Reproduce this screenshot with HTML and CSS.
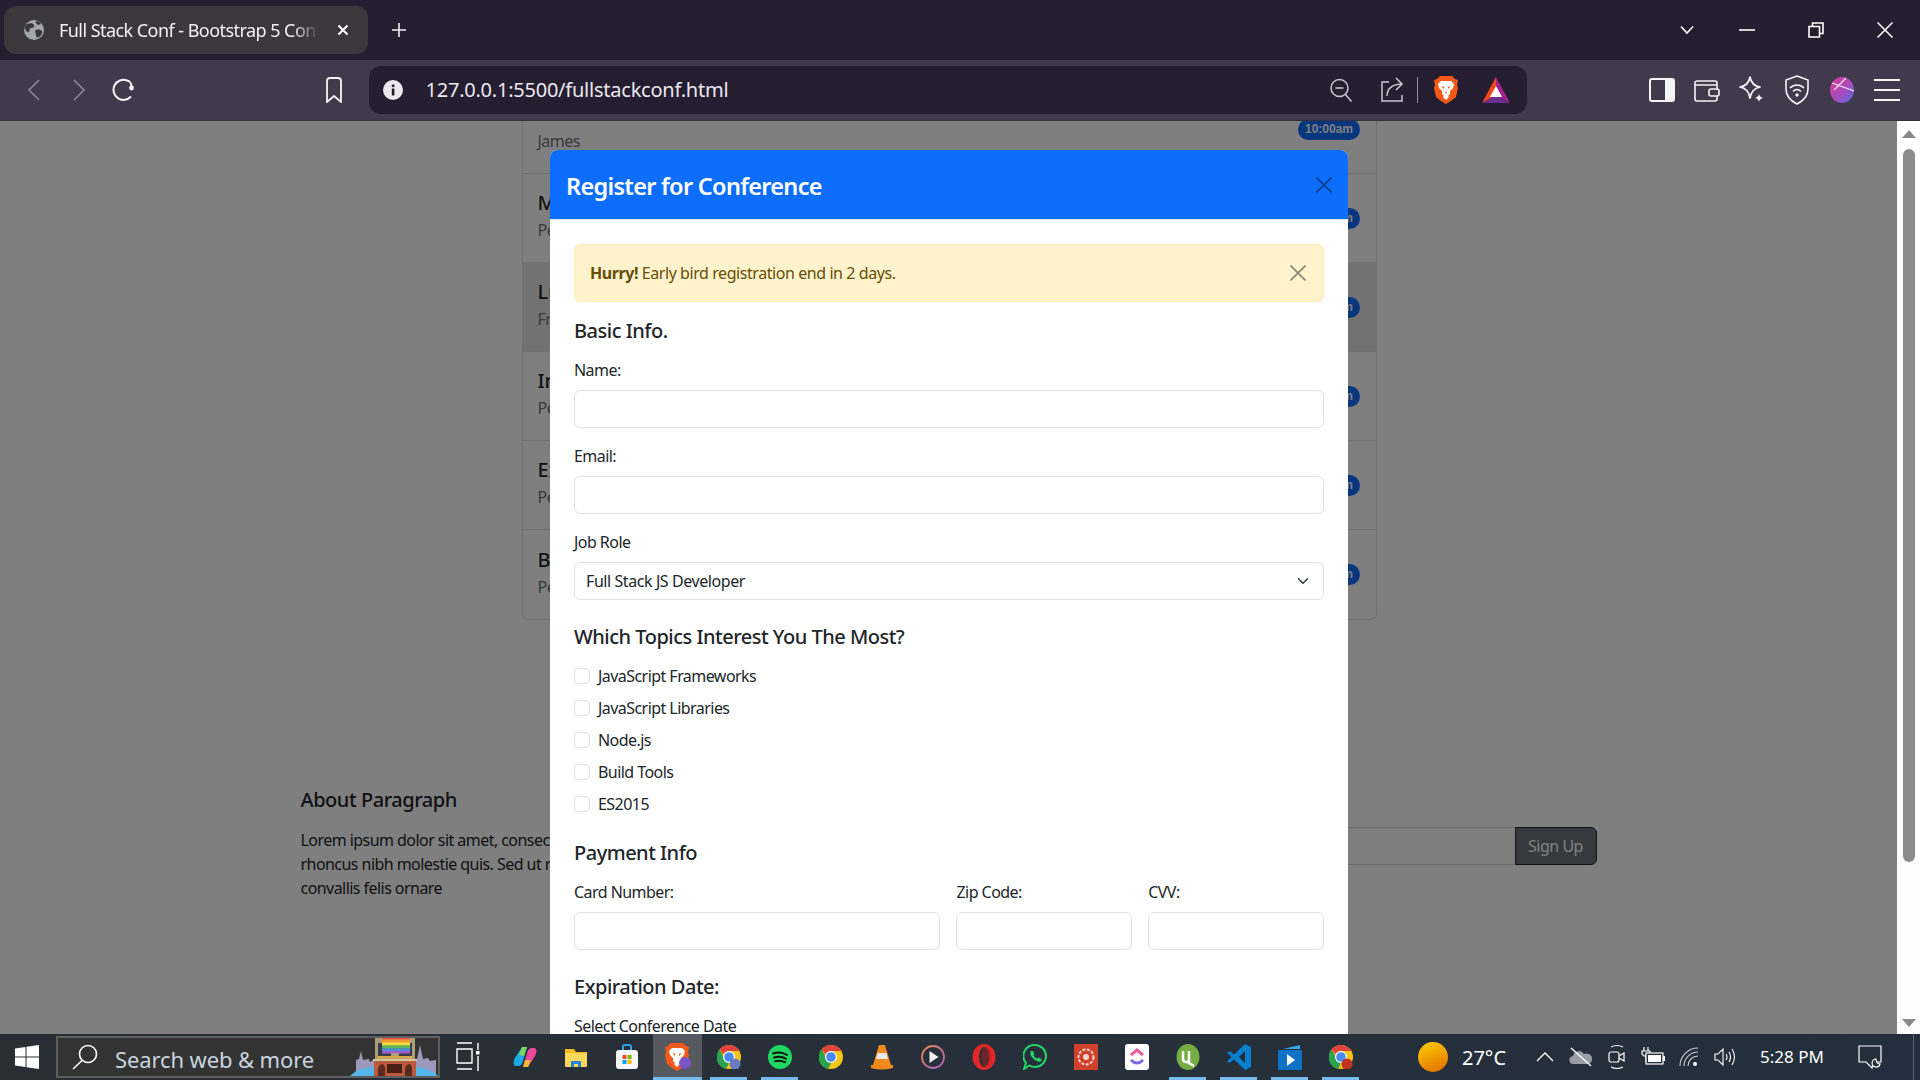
FILE: index.html
```html
<!DOCTYPE html>
<html lang="en">
<head>
<meta charset="utf-8">
<title>Full Stack Conf - Bootstrap 5 Conference</title>
<link rel="stylesheet" href="styles.css">
</head>
<body>
<div class="tabstrip">
  <div class="tab">
    <svg class="favicon" width="20" height="20" viewBox="0 0 20 20"><circle cx="10" cy="10" r="10" fill="#a3a6ab"/><path d="M3 4c3-1 6-1 7 1s-1 3-3 3-1 3-2 4-3-1-4-3 0-4 2-5zM12 10c2-1 5 0 6 1s-1 5-3 6-3 0-3-2-2-4 0-5zM12 1c2 0 4 1 5 3l-3 1c-1-1-3-2-2-4z" fill="#3b383c"/></svg>
    <span class="tab-title">Full Stack Conf - Bootstrap 5 Conference</span>
    <svg class="tab-x" width="12" height="12" viewBox="0 0 12 12"><path d="M1.500 1.500l9 9M10.500 1.500l-9 9" stroke="#fff" stroke-width="2"/></svg>
  </div>
  <svg class="plus" width="16" height="16" viewBox="0 0 16 16"><path d="M8 1v14M1 8h14" stroke="#f2f2f2" stroke-width="1.600"/></svg>
  <div class="winctl">
    <div class="winbtn chev"><svg width="14" height="10" viewBox="0 0 14 10"><path d="M1 1.500l6 6.500 6-6.500" fill="none" stroke="#fff" stroke-width="1.600"/></svg></div>
    <div class="winbtn"><svg width="16" height="2" viewBox="0 0 16 2"><path d="M0 1h16" stroke="#fff" stroke-width="1.600"/></svg></div>
    <div class="winbtn"><svg width="16" height="16" viewBox="0 0 16 16"><path d="M1 4.500h10.500v10.500H1zM4.500 4.500V1H15v10.500h-3.500" fill="none" stroke="#fff" stroke-width="1.600"/></svg></div>
    <div class="winbtn"><svg width="16" height="16" viewBox="0 0 16 16"><path d="M.5.500l15 15M15.500.500l-15 15" stroke="#fff" stroke-width="1.500"/></svg></div>
  </div>
</div>

<div class="toolbar">
  <div class="tbtn"><svg width="14" height="24" viewBox="0 0 14 24"><path d="M12 2L2 12l10 10" fill="none" stroke="#8b8794" stroke-width="1.600"/></svg></div>
  <div class="tbtn"><svg width="14" height="24" viewBox="0 0 14 24"><path d="M2 2l10 10L2 22" fill="none" stroke="#8b8794" stroke-width="1.600"/></svg></div>
  <div class="tbtn"><svg width="24" height="24" viewBox="0 0 24 24"><path d="M19 18.500A10 10 0 1 1 15 2.500" fill="none" stroke="#f4f4f6" stroke-width="2"/><path d="M15 2.500c2.500.5 4.500 3 4.500 6" fill="none" stroke="#f4f4f6" stroke-width="2"/><circle cx="19.500" cy="10" r="2.400" fill="#f4f4f6"/></svg></div>
  <div class="tbtn bookmark"><svg width="18" height="26" viewBox="0 0 18 26"><path d="M2 4q0-3 3-3h8q3 0 3 3v21l-7-6-7 6z" fill="none" stroke="#f4f4f6" stroke-width="1.800"/></svg></div>
  <div class="urlbar">
    <svg class="info" width="20" height="20" viewBox="0 0 20 20"><circle cx="10" cy="10" r="10" fill="#ebe8ef"/><rect x="8.800" y="8.500" width="2.600" height="7" fill="#251d30"/><rect x="8.800" y="4.500" width="2.600" height="2.600" fill="#251d30"/></svg>
    <span class="url">127.0.0.1:5500/fullstackconf.html</span>
    <div class="url-icons">
      <svg class="ui-zoom" width="24" height="26" viewBox="0 0 24 26"><circle cx="10.500" cy="11" r="8.500" fill="none" stroke="#c9c6ce" stroke-width="1.500"/><path d="M6.500 11h8M16.500 17.500l6 7" stroke="#c9c6ce" stroke-width="1.500"/></svg>
      <svg class="ui-share" width="24" height="26" viewBox="0 0 24 26"><path d="M9 5H2v19h20v-6" fill="none" stroke="#c9c6ce" stroke-width="1.500"/><path d="M7 19c0-7 5-12 15-12M16 1l6 6-6 6" fill="none" stroke="#c9c6ce" stroke-width="1.500"/></svg>
      <span class="ui-sep"></span>
      <svg class="ui-brave" width="24" height="28" viewBox="0 0 24 28"><path d="M6 0h12l3 3 3 1-1 5 1 3-2 9-5 4-5 3-5-3-5-4-2-9 1-3-1-5 3-1z" fill="#f5591a"/><path d="M7 5h10l3 3-1 4-3 3v3l-2 2 1 1-3 3-3-3 1-1-2-2v-3l-3-3-1-4z" fill="#fff"/><path d="M7.500 10l3 1-1 2zM16.500 10l-3 1 1 2zM11 16h2l-1 2z" fill="#f5591a"/></svg>
      <svg class="ui-bat" width="28" height="28" viewBox="0 0 28 28"><path d="M14 1L0 27l14-8z" fill="#f0471f"/><path d="M14 1l14 26-14-8z" fill="#a3238e"/><path d="M0 27h28l-14-8z" fill="#6c2f91"/><path d="M14 10l6 11H8z" fill="#fff"/></svg>
    </div>
  </div>
  <div class="tools">
    <div class="tool"><svg width="26" height="24" viewBox="0 0 26 24"><rect x="1" y="1" width="24" height="22" rx="2" fill="none" stroke="#f4f4f6" stroke-width="2"/><rect x="16" y="1" width="9" height="22" fill="#f4f4f6"/></svg></div>
    <div class="tool"><svg width="26" height="24" viewBox="0 0 26 24"><path d="M3 3h18a2 2 0 0 1 2 2v16a2 2 0 0 1-2 2H3a2 2 0 0 1-2-2V4a3 3 0 0 1 2-1zM1 7h22" fill="none" stroke="#f4f4f6" stroke-width="1.600"/><rect x="15" y="11" width="10" height="7" rx="2" fill="#413a4d" stroke="#f4f4f6" stroke-width="1.600"/></svg></div>
    <div class="tool"><svg width="26" height="28" viewBox="0 0 26 28"><path d="M11 1c1 6 4 9 10 10-5 1-9 5-10 11-1-6-4-10-10-11 6-1 9-4 10-10z" fill="none" stroke="#f4f4f6" stroke-width="1.700" stroke-linejoin="round"/><path d="M20 18c.4 2 1.600 3.200 4 4-2.400.5-3.600 2-4 4-.4-2-1.600-3.500-4-4 2.400-.8 3.600-2 4-4z" fill="#f4f4f6"/></svg></div>
    <div class="tool"><svg width="24" height="30" viewBox="0 0 24 30"><path d="M12 1l11 4v9c0 7-5 12-11 15C6 26 1 21 1 14V5z" fill="none" stroke="#f4f4f6" stroke-width="1.600"/><path d="M5 13c4-4 10-4 14 0M8 16.500c2.500-2.500 5.500-2.500 8 0" fill="none" stroke="#f4f4f6" stroke-width="1.600"/><circle cx="12" cy="20" r="1.700" fill="#f4f4f6"/></svg></div>
    <div class="tool"><svg width="24" height="26" viewBox="0 0 24 26"><defs><linearGradient id="av" x1="0" y1="0" x2="1" y2="1"><stop offset="0" stop-color="#dd3a8e"/><stop offset=".55" stop-color="#a84cc0"/><stop offset="1" stop-color="#4f6ae0"/></linearGradient></defs><ellipse cx="12" cy="13" rx="12" ry="13" fill="url(#av)"/><path d="M2 6l22 8M16 1L4 13" stroke="#f3dff0" stroke-width="1.200"/></svg></div>
    <div class="tool"><svg width="26" height="24" viewBox="0 0 26 24"><path d="M0 2h26M0 12h26M0 22h26" stroke="#f4f4f6" stroke-width="2"/></svg></div>
  </div>
</div>

<div class="viewport">
  <main class="page">
    <div class="container">
      <ul class="sessions">
        <li class="session">
          <div><h5>Node Basics</h5><p>James</p></div><span class="pill">10:00am</span>
        </li>
        <li class="session">
          <div><h5>Microservices</h5><p>Peter Smith</p></div><span class="pill">11:00am</span>
        </li>
        <li class="session current">
          <div><h5>Lunch</h5><p>Free time</p></div><span class="pill">12:00pm</span>
        </li>
        <li class="session">
          <div><h5>Intro to React</h5><p>Peter Jones</p></div><span class="pill">1:00pm</span>
        </li>
        <li class="session">
          <div><h5>Express Routing</h5><p>Peter Brown</p></div><span class="pill">2:00pm</span>
        </li>
        <li class="session">
          <div><h5>Bootstrap 5</h5><p>Peter Parker</p></div><span class="pill">3:00pm</span>
        </li>
      </ul>
      <footer class="foot">
        <section class="about">
          <h5>About Paragraph</h5>
          <p>Lorem ipsum dolor sit amet, consectetur adipiscing elit. Nunc<br>rhoncus nibh molestie quis. Sed ut rutrum nisi, vel aliquet<br>convallis felis ornare</p>
        </section>
        <form class="signup">
          <input class="signup-input" type="text" aria-label="Email">
          <button class="signup-btn" type="button">Sign Up</button>
        </form>
      </footer>
    </div>
    <div class="backdrop"></div>
    <div class="modal">
      <header class="modal-head">
        <h4>Register for Conference</h4>
        <svg class="modal-x" width="16" height="16" viewBox="0 0 16 16"><path d="M.5.500l15 15M15.500.500l-15 15" stroke="#0a3d85" stroke-width="1.600"/></svg>
      </header>
      <div class="modal-body">
        <div class="alert"><span><strong>Hurry!</strong> Early bird registration end in 2 days.</span>
          <svg width="16" height="16" viewBox="0 0 16 16"><path d="M.5.500l15 15M15.500.500l-15 15" stroke="#8a8371" stroke-width="1.600"/></svg>
        </div>
        <h5 class="sec">Basic Info.</h5>
        <div class="field"><label>Name:</label><input type="text"></div>
        <div class="field"><label>Email:</label><input type="text"></div>
        <div class="field"><label>Job Role</label>
          <select><option>Full Stack JS Developer</option></select>
        </div>
        <h5 class="sec">Which Topics Interest You The Most?</h5>
        <div class="checks">
          <label class="check"><input type="checkbox">JavaScript Frameworks</label>
          <label class="check"><input type="checkbox">JavaScript Libraries</label>
          <label class="check"><input type="checkbox">Node.js</label>
          <label class="check"><input type="checkbox">Build Tools</label>
          <label class="check"><input type="checkbox">ES2015</label>
        </div>
        <h5 class="sec">Payment Info</h5>
        <div class="pay">
          <div class="field"><label>Card Number:</label><input type="text"></div>
          <div class="field"><label>Zip Code:</label><input type="text"></div>
          <div class="field"><label>CVV:</label><input type="text"></div>
        </div>
        <h5 class="sec">Expiration Date:</h5>
        <div class="field"><label>Select Conference Date</label><input type="text"></div>
      </div>
    </div>
  </main>
  <aside class="scrollbar">
    <span class="arrow up"></span>
    <span class="thumb"></span>
    <span class="arrow down"></span>
  </aside>
</div>

<div class="taskbar">
  <div class="start"><svg width="24" height="24" viewBox="0 0 24 24"><path d="M0 3.500l10.500-1.500v9.500H0zM11.500 1.800L24 0v11.500H11.500zM0 12.500h10.500V22L0 20.500zM11.500 12.500H24V24l-12.500-1.800z" fill="#fff"/></svg></div>
  <div class="search">
    <svg class="search-ico" width="26" height="26" viewBox="0 0 26 26"><circle cx="16" cy="10" r="8.500" fill="none" stroke="#fff" stroke-width="1.600"/><path d="M10 16.500L1 25" stroke="#fff" stroke-width="1.600"/></svg>
    <span class="search-text">Search web &amp; more</span>
    <svg class="search-art" width="88" height="42" viewBox="0 0 88 42">
      <path d="M6 42V26l3-1 2-8 2 9 6-1 1 3 5-3v17zM64 42V28l3-3 3-14 3 14 5-1 2 3 6-1v16z" fill="#9c98ba"/>
      <path d="M0 42q8-9 26-9h36q18 0 26 9z" fill="#54b6ea"/>
      <rect x="23" y="0" width="44" height="2.500" fill="#d4c6a0"/>
      <rect x="25" y="2" width="40" height="24" fill="#ab9c7a"/>
      <rect x="28" y="9" width="34" height="15" fill="#3a3c48"/>
      <rect x="32" y="2.500" width="28" height="3.200" fill="#ef4b4b"/><rect x="32" y="5.500" width="28" height="3.200" fill="#f39a2e"/><rect x="32" y="8.500" width="28" height="3.200" fill="#f7dc3c"/><rect x="32" y="11.500" width="28" height="3.200" fill="#5cb85c"/><rect x="32" y="14.500" width="28" height="3" fill="#4a8fe0"/><rect x="32" y="17" width="28" height="2.500" fill="#a35bc9"/>
      <rect x="41" y="19" width="8" height="5" fill="#ab9c7a"/>
      <rect x="27" y="22" width="36" height="2.500" fill="#d8a94c"/>
      <rect x="23" y="25" width="44" height="2" fill="#d4c6a0"/>
      <rect x="24" y="27" width="42" height="15" fill="#bb5a3c"/>
      <path d="M28 42v-8q2-4 4-4t3 4v8zM55 42v-8q2-4 4-4t3 4v8z" fill="#5a2a1e"/><rect x="37" y="30" width="15" height="9" fill="#4a1f18"/>
    </svg>
  </div>
  <div class="apps">
    <div class="app taskview"><svg width="24" height="30" viewBox="0 0 24 30"><path d="M1 1h15M1 7h15v14H1zM1 27h15M22 1v7M22 14v15" fill="none" stroke="#fff" stroke-width="1.400"/><rect x="20" y="9" width="3.500" height="3.500" fill="#fff"/></svg></div>
    <div class="app copilot"><svg width="24" height="24" viewBox="0 0 24 24"><path d="M9 2h5l-4 14c-1 3-2 5-5 5H3C0 21 0 17 2 13z" fill="#1aa9e6"/><path d="M9 2h5l-3 9-5-1z" fill="#7dd657"/><path d="M15 22h-5l4-14c1-3 2-5 5-5h2c3 0 3 4 1 8z" fill="#e8479a"/><path d="M15 22h-5l2-7h6z" fill="#f7b733"/></svg></div>
    <div class="app"><svg width="24" height="24" viewBox="0 0 24 24"><path d="M1 4h9l2 3h11v3H1z" fill="#f5b921"/><rect x="1" y="8" width="22" height="14" rx="1" fill="#fbd75b"/><path d="M7 22v-6h10v6h-3v-3h-4v3z" fill="#2a80d8"/></svg></div>
    <div class="app"><svg width="24" height="26" viewBox="0 0 24 26"><path d="M8 7V3a2 2 0 0 1 2-2h4a2 2 0 0 1 2 2v4" fill="none" stroke="#2ba5e8" stroke-width="2"/><rect x="1" y="6" width="22" height="19" rx="3" fill="#f5f5f5"/><rect x="7.500" y="11" width="4" height="4" fill="#f25022"/><rect x="12.500" y="11" width="4" height="4" fill="#7fba00"/><rect x="7.500" y="16" width="4" height="4" fill="#00a4ef"/><rect x="12.500" y="16" width="4" height="4" fill="#ffb900"/></svg></div>
    <div class="app active"><svg width="26" height="28" viewBox="0 0 26 28"><path d="M6 0h12l3 3 3 1-1 5 1 3-2 9-5 4-5 3-5-3-5-4-2-9 1-3-1-5 3-1z" fill="#f5591a"/><path d="M7 5h10l3 3-1 4-3 3v3l-2 2 1 1-3 3-3-3 1-1-2-2v-3l-3-3-1-4z" fill="#fff"/><path d="M7.500 10l3 1-1 2zM16.500 10l-3 1 1 2z" fill="#f5591a"/><circle cx="20" cy="20" r="6" fill="#7a54c9"/></svg></div>
    <div class="app open"><svg class="chrome" width="24" height="24" viewBox="0 0 24 24"><circle cx="12" cy="12" r="12" fill="#f5c518"/><path d="M12 0a12 12 0 0 1 10.400 6H12a6 6 0 0 0-5.600 3.600L2.500 4.500A12 12 0 0 1 12 0z" fill="#e2443a"/><path d="M2.500 4.500l4.500 8 5 5.500-3 6A12 12 0 0 1 2.500 4.500z" fill="#2ba24c"/><circle cx="12" cy="12" r="6" fill="#fff"/><circle cx="12" cy="12" r="4.800" fill="#4a8af4"/><circle cx="18" cy="19" r="5.500" fill="#6a7bc4"/></svg></div>
    <div class="app open"><svg width="24" height="24" viewBox="0 0 24 24"><circle cx="12" cy="12" r="12" fill="#1ed760"/><path d="M5 8.500c5-1.500 10-1 14 1.500M6 12.500c4-1 8.500-.8 12 1.300M7 16.200c3.500-.8 7-.5 10 1" fill="none" stroke="#111" stroke-width="2" stroke-linecap="round"/></svg></div>
    <div class="app"><svg width="24" height="24" viewBox="0 0 24 24"><circle cx="12" cy="12" r="12" fill="#f5c518"/><path d="M12 0a12 12 0 0 1 10.400 6H12a6 6 0 0 0-5.600 3.600L2.500 4.500A12 12 0 0 1 12 0z" fill="#e2443a"/><path d="M2.500 4.500l4.500 8 5 5.500-3 6A12 12 0 0 1 2.500 4.500z" fill="#2ba24c"/><circle cx="12" cy="12" r="6" fill="#fff"/><circle cx="12" cy="12" r="4.800" fill="#4a8af4"/></svg></div>
    <div class="app"><svg width="22" height="26" viewBox="0 0 22 26"><path d="M8 1h6l6 20H2z" fill="#f08a1c"/><path d="M6.500 9h9l1.500 6H5z" fill="#e8e8e8"/><path d="M0 21h22v3q-11 3-22 0z" fill="#f08a1c"/></svg></div>
    <div class="app"><svg width="24" height="24" viewBox="0 0 24 24"><defs><linearGradient id="pg" x1="0" y1="0" x2="1" y2="1"><stop offset="0" stop-color="#e88a4a"/><stop offset="1" stop-color="#a55fc5"/></linearGradient></defs><circle cx="12" cy="12" r="11" fill="none" stroke="url(#pg)" stroke-width="1.800"/><path d="M8.500 6v12l9-6z" fill="#eee"/></svg></div>
    <div class="app"><svg width="24" height="26" viewBox="0 0 24 26"><ellipse cx="12" cy="13" rx="11.500" ry="13" fill="#e02828"/><ellipse cx="12" cy="13" rx="5" ry="10" fill="#2a303a"/><ellipse cx="14" cy="13" rx="5" ry="10" fill="#a51a1a" opacity=".5"/></svg></div>
    <div class="app"><svg width="24" height="26" viewBox="0 0 24 26"><path d="M12 1a11 11 0 0 1 0 22c-2 0-4-.5-5.500-1.500L1 25l2-6A11 11 0 0 1 12 1z" fill="none" stroke="#25d366" stroke-width="2"/><path d="M8 7l2 0 1.500 3-1 1.500c1 1.500 2 2.500 3.500 3l1.500-1 3 1.500v2c-1 1-3 1-5 0s-5-3.500-6-6c-.5-2 0-3.500.5-4z" fill="#25d366"/></svg></div>
    <div class="app"><svg width="24" height="26" viewBox="0 0 24 26"><rect width="24" height="26" fill="#d0402a"/><circle cx="12" cy="13" r="7.500" fill="none" stroke="#f3d7d0" stroke-width="2" stroke-dasharray="3 1.500"/><circle cx="12" cy="13" r="3" fill="#f3d7d0"/></svg></div>
    <div class="app"><svg width="24" height="26" viewBox="0 0 24 26"><rect width="24" height="26" rx="3" fill="#fff"/><path d="M6 11l6-5 6 5" fill="none" stroke="#ee5e99" stroke-width="3"/><path d="M6 16c4 4 8 4 12 0" fill="none" stroke="#7b68ee" stroke-width="3"/></svg></div>
    <div class="app open"><svg width="24" height="26" viewBox="0 0 24 26"><ellipse cx="12" cy="13" rx="11.500" ry="13" fill="#76ad43"/><path d="M7 7v8c0 3 4 4 6 2M13 7v12l5 3" fill="none" stroke="#fff" stroke-width="2.500"/></svg></div>
    <div class="app open"><svg width="24" height="26" viewBox="0 0 24 26"><path d="M18 0l6 3v20l-6 3L7 15.500 2.500 19 0 17.500 4.500 13 0 8.500 2.500 7 7 10.500z" fill="#0a7fd0"/><path d="M18 7l-6 6 6 6z" fill="#232b33"/></svg></div>
    <div class="app open"><svg width="24" height="26" viewBox="0 0 24 26"><path d="M5 5l17-4v4z" fill="#35a7e6"/><rect y="6" width="24" height="20" fill="#0f72c6"/><path d="M9 10v12l8-6z" fill="#fff"/></svg></div>
    <div class="app open"><svg width="24" height="24" viewBox="0 0 24 24"><circle cx="12" cy="12" r="12" fill="#f5c518"/><path d="M12 0a12 12 0 0 1 10.400 6H12a6 6 0 0 0-5.600 3.600L2.500 4.500A12 12 0 0 1 12 0z" fill="#e2443a"/><path d="M2.500 4.500l4.500 8 5 5.500-3 6A12 12 0 0 1 2.500 4.500z" fill="#2ba24c"/><circle cx="12" cy="12" r="6" fill="#fff"/><circle cx="12" cy="12" r="4.800" fill="#4a8af4"/><circle cx="18" cy="19" r="5.500" fill="#c0341f"/></svg></div>
  </div>
  <div class="tray">
    <div class="sun-wrap"><span class="sun"></span></div>
    <span class="temp">27°C</span>
    <div class="tr"><svg width="18" height="10" viewBox="0 0 18 10"><path d="M1 9l8-8 8 8" fill="none" stroke="#fff" stroke-width="1.300"/></svg></div>
    <div class="tr"><svg width="24" height="20" viewBox="0 0 24 20"><path d="M5 17a4 4 0 0 1-1-8 6 6 0 0 1 11-2 5 5 0 0 1 5 10z" fill="#9a9fa6"/><path d="M2 1l20 18" stroke="#fff" stroke-width="1.300"/></svg></div>
    <div class="tr"><svg width="18" height="26" viewBox="0 0 18 26"><rect x="1" y="8" width="10" height="10" rx="2" fill="none" stroke="#fff" stroke-width="1.200"/><path d="M11 12l5-3v8l-5-3" fill="none" stroke="#fff" stroke-width="1.200"/><path d="M3 3q6-3 12 0M3 23q6 3 12 0" fill="none" stroke="#fff" stroke-width="1.100"/></svg></div>
    <div class="tr"><svg width="24" height="22" viewBox="0 0 24 22"><path d="M3 1v4M7 1v4M1 5h8v3l-2 2H3L1 8zM5 10v6" fill="none" stroke="#fff" stroke-width="1.200"/><rect x="5" y="7" width="17" height="11" fill="#25303b" stroke="#fff" stroke-width="1.200"/><rect x="7" y="9" width="13" height="7" fill="#fff"/><rect x="22" y="10" width="2" height="5" fill="#fff"/></svg></div>
    <div class="tr"><svg width="20" height="20" viewBox="0 0 20 20"><path d="M1 19A18 18 0 0 1 19 1M5 19A14 14 0 0 1 19 5M9 19A10 10 0 0 1 19 9" fill="none" stroke="#c9ced4" stroke-width="1.100"/><circle cx="16" cy="17" r="2" fill="#fff"/></svg></div>
    <div class="tr"><svg width="22" height="20" viewBox="0 0 22 20"><path d="M1 7h3l5-5v16l-5-5H1z" fill="none" stroke="#fff" stroke-width="1.100"/><path d="M12 7q2 3 0 6M15 5q3 5 0 10M18 2q5 8 0 16" fill="none" stroke="#fff" stroke-width="1.100"/></svg></div>
    <span class="clock">5:28 PM</span>
    <div class="notif"><svg width="24" height="24" viewBox="0 0 24 24"><path d="M1 1h22v16l-5 0-3 2-1 4-6-6H1z" fill="none" stroke="#fff" stroke-width="1.200"/><path d="M18 14a4 4 0 1 0 4 5 5 5 0 0 1-4-5z" fill="#25303b" stroke="#fff" stroke-width="1.200"/></svg></div>
    <span class="desk-edge"></span>
  </div>
</div>
</body>
</html>
```

FILE: styles.css
```css
* { box-sizing: border-box; }
html, body { margin: 0; height: 100%; }
body {
  display: flex;
  flex-direction: column;
  height: 100vh;
  overflow: hidden;
  font-family: "Noto Sans", "Open Sans", sans-serif;
  font-size: 16px;
  line-height: 24px;
  color: #212529;
  background: #fff;
}
h4, h5, p, ul { margin: 0; padding: 0; }

/* browser tab strip */
.tabstrip {
  flex: none;
  height: 60px;
  display: flex;
  align-items: center;
  background: #251d30;
  padding-left: 4px;
}
.tab {
  width: 364px;
  height: 48px;
  display: flex;
  align-items: center;
  background: #3b383c;
  border-radius: 12px;
  padding-left: 20px;
  color: #f2f2f2;
}
.favicon { flex: none; }
.tab-title {
  width: 260px;
  margin-left: 15px;
  white-space: nowrap;
  overflow: hidden;
  font-size: 18px;
  letter-spacing: -0.55px;
  -webkit-mask-image: linear-gradient(to right, #000 90%, transparent 100%);
  mask-image: linear-gradient(to right, #000 90%, transparent 100%);
}
.tab-x { margin-left: 18px; flex: none; }
.plus { margin-left: 23px; }
.winctl { margin-left: auto; display: flex; align-items: center; padding-right: 1px; }
.winbtn { width: 69px; height: 60px; display: flex; align-items: center; justify-content: center; }
.winbtn.chev { width: 51px; }

/* browser toolbar */
.toolbar {
  flex: none;
  height: 61px;
  display: flex;
  align-items: center;
  background: #413a4d;
  border-bottom: 1px solid #35303e;
  padding-left: 11px;
}
.tbtn { width: 45px; height: 44px; display: flex; align-items: center; justify-content: center; }
.tbtn.bookmark { margin-left: 165.5px; }
.urlbar {
  width: 1158px;
  height: 48px;
  margin-left: 12px;
  display: flex;
  align-items: center;
  background: #251d30;
  border-radius: 12px;
  padding-left: 14px;
  color: #ebe8ef;
}
.url { margin-left: 23px; font-size: 20px; letter-spacing: -0.23px; white-space: nowrap; }
.url-icons { margin-left: auto; display: flex; align-items: center; padding-right: 17px; }
.ui-share { margin-left: 27px; }
.ui-sep { width: 1px; height: 26px; background: #8f8b97; margin-left: 13px; }
.ui-brave { margin-left: 16px; }
.ui-bat { margin-left: 24px; }
.tools { margin-left: auto; display: flex; padding-right: 11px; }
.tool { width: 45px; height: 44px; display: flex; align-items: center; justify-content: center; }

/* viewport */
.viewport { flex: 1; min-height: 0; display: flex; }
.page { position: relative; flex: 1; min-width: 0; overflow: hidden; background: #fff; }
.container { width: 1296px; margin: 0 auto; }
.sessions {
  list-style: none;
  width: 855px;
  margin: -37px 0 0 221px;
  border: 1px solid #dedfe0;
  border-radius: 6px;
}
.session {
  height: 89px;
  display: flex;
  align-items: center;
  justify-content: space-between;
  padding: 0 16px 0 15px;
  border-bottom: 1px solid #dedfe0;
}
.session:last-child { border-bottom: 0; }
.session.current { background: #e4e4e4; }
.session > div { margin-top: -3px; }
.session h5 { font-size: 20px; font-weight: 500; line-height: 24px; margin-bottom: 3px; }
.session p { color: #6c757d; letter-spacing: -0.5px; }
.pill {
  height: 21px;
  padding: 0 6.5px;
  border-radius: 11px;
  background: #0d6efd;
  color: #fff;
  font: 700 12px/21px "Liberation Sans", sans-serif;
  text-align: center;
}
.foot { display: flex; justify-content: space-between; margin-top: 168px; }
.about h5 { font-size: 20px; font-weight: 500; line-height: 24px; margin-bottom: 16px; letter-spacing: -0.45px; }
.about p { font-size: 16px; letter-spacing: -0.55px; white-space: nowrap; }
.signup { display: flex; height: 38px; margin-top: 39px; }
.signup-input { width: 440px; border: 1px solid #ced4da; border-right: 0; background: #fff; }
.signup-btn {
  width: 82px;
  border: 1px solid #212529;
  border-radius: 0 6px 6px 0;
  background: #6c757d;
  color: #fff;
  font: 16px "Noto Sans", sans-serif;
  letter-spacing: -0.5px;
  padding: 0;
}
.backdrop { position: absolute; inset: 0; background: rgba(0, 0, 0, 0.5); }

/* modal */
.modal {
  position: absolute;
  top: 29px;
  left: 550px;
  width: 798px;
  background: #fff;
  border-radius: 8px 8px 0 0;
  overflow: hidden;
}
.modal-head {
  height: 70px;
  display: flex;
  align-items: center;
  justify-content: space-between;
  background: #0d6efd;
  border-bottom: 1px solid #e3e6ea;
  padding: 0 16px;
  color: #fff;
}
.modal-head h4 { font-size: 23.5px; font-weight: 600; letter-spacing: -0.7px; line-height: 28px; margin-top: 3px; }
.modal-x { margin-top: 1px; }
.modal-body { padding: 24px; }
.alert {
  height: 58px;
  display: flex;
  align-items: center;
  justify-content: space-between;
  background: #fff3cd;
  border: 1px solid #ffecb5;
  border-radius: 6px;
  padding: 0 17px 0 15px;
  color: #664d03;
  font-size: 16px;
  letter-spacing: -0.43px;
  margin-bottom: 17px;
}
.alert strong { font-weight: 700; }
.sec {
  font-size: 20px;
  font-weight: 500;
  line-height: 24px;
  letter-spacing: -0.5px;
  margin-bottom: 15px;
}
.field + .sec, .pay + .sec { margin-top: 25px; }
.field { margin-bottom: 16px; }
.pay .field { margin-bottom: 0; }
.field label { display: block; font-size: 16px; letter-spacing: -0.55px; margin-bottom: 8px; }
.field input, .field select {
  display: block;
  width: 100%;
  height: 38px;
  border: 1px solid #dee2e6;
  border-radius: 6px;
  background: #fff;
}
.field select {
  appearance: none;
  -webkit-appearance: none;
  padding: 0 11px;
  font: 16px "Noto Sans", sans-serif;
  letter-spacing: -0.42px;
  color: #212529;
  background: #fff url("data:image/svg+xml,%3csvg xmlns='http://www.w3.org/2000/svg' viewBox='0 0 16 16'%3e%3cpath fill='none' stroke='%23343a40' stroke-linecap='round' stroke-linejoin='round' stroke-width='2' d='M2 5l6 6 6-6'/%3e%3c/svg%3e") no-repeat right 14px center / 12px;
}
.checks { margin-bottom: 25px; }
.check {
  display: flex;
  align-items: center;
  height: 24px;
  margin-bottom: 8px;
  font-size: 16px;
  letter-spacing: -0.55px;
}
.check input {
  appearance: none;
  -webkit-appearance: none;
  width: 16px;
  height: 16px;
  margin: 0 8px 0 0;
  border: 1px solid #dee2e6;
  border-radius: 4px;
}
.pay { display: grid; grid-template-columns: 367fr 176fr 176fr; gap: 16px; }

/* scrollbar */
.scrollbar {
  flex: none;
  width: 23px;
  display: flex;
  flex-direction: column;
  align-items: center;
  background: #fdfdfd;
  padding: 9px 0 7px;
}
.arrow { width: 0; height: 0; border-left: 7.5px solid transparent; border-right: 7.5px solid transparent; }
.arrow.up { border-bottom: 8px solid #8a8a8a; }
.arrow.down { border-top: 8px solid #8a8a8a; margin-top: auto; }
.thumb { width: 12px; height: 713px; margin-top: 11px; background: #8b8b8b; border-radius: 6px; }

/* windows taskbar */
.taskbar {
  flex: none;
  height: 46px;
  display: flex;
  align-items: center;
  background: linear-gradient(to right, #2a2d33, #27303a 50%, #232f3c);
  color: #fff;
}
.start { width: 56px; height: 46px; display: flex; align-items: center; justify-content: center; padding-right: 2px; }
.search {
  position: relative;
  width: 384px;
  height: 42px;
  display: flex;
  align-items: center;
  background: #333;
  border: 2px solid #5e5e5e;
  overflow: hidden;
  padding-left: 14px;
}
.search-text { margin: 3px 0 0 17px; font-size: 22px; letter-spacing: -0.12px; color: #c9d4de; white-space: nowrap; }
.search-art { position: absolute; right: 0; bottom: 0; }
.apps { display: flex; align-items: center; margin-left: 2px; height: 46px; }
.app { position: relative; width: 51px; height: 46px; display: flex; align-items: center; justify-content: center; }
.app.taskview { width: 52px; margin-right: 5px; }
.app.active { background: #565a60; width: 49px; margin: 0 1px; }
.app.open::after, .app.active::after {
  content: "";
  position: absolute;
  left: 7px;
  right: 7px;
  bottom: 0;
  height: 3px;
  background: #76b9ed;
}
.app.active::after { left: 0; right: 0; }
.tray { margin-left: auto; display: flex; align-items: center; height: 46px; padding-right: 21px; position: relative; }
.sun-wrap { width: 40px; display: flex; justify-content: center; }
.sun { width: 30px; height: 30px; border-radius: 50%; background: linear-gradient(160deg, #ffd000, #e06a00); }
.temp { width: 74px; padding-right: 12px; padding-top: 2px; font-size: 20px; text-align: center; }
.tr { width: 36px; display: flex; justify-content: center; }
.clock { width: 98px; text-align: center; font-size: 17px; white-space: nowrap; }
.notif { width: 58px; display: flex; justify-content: center; }
.desk-edge { position: absolute; right: 6px; top: 0; width: 1px; height: 46px; background: #5a6470; }
```
